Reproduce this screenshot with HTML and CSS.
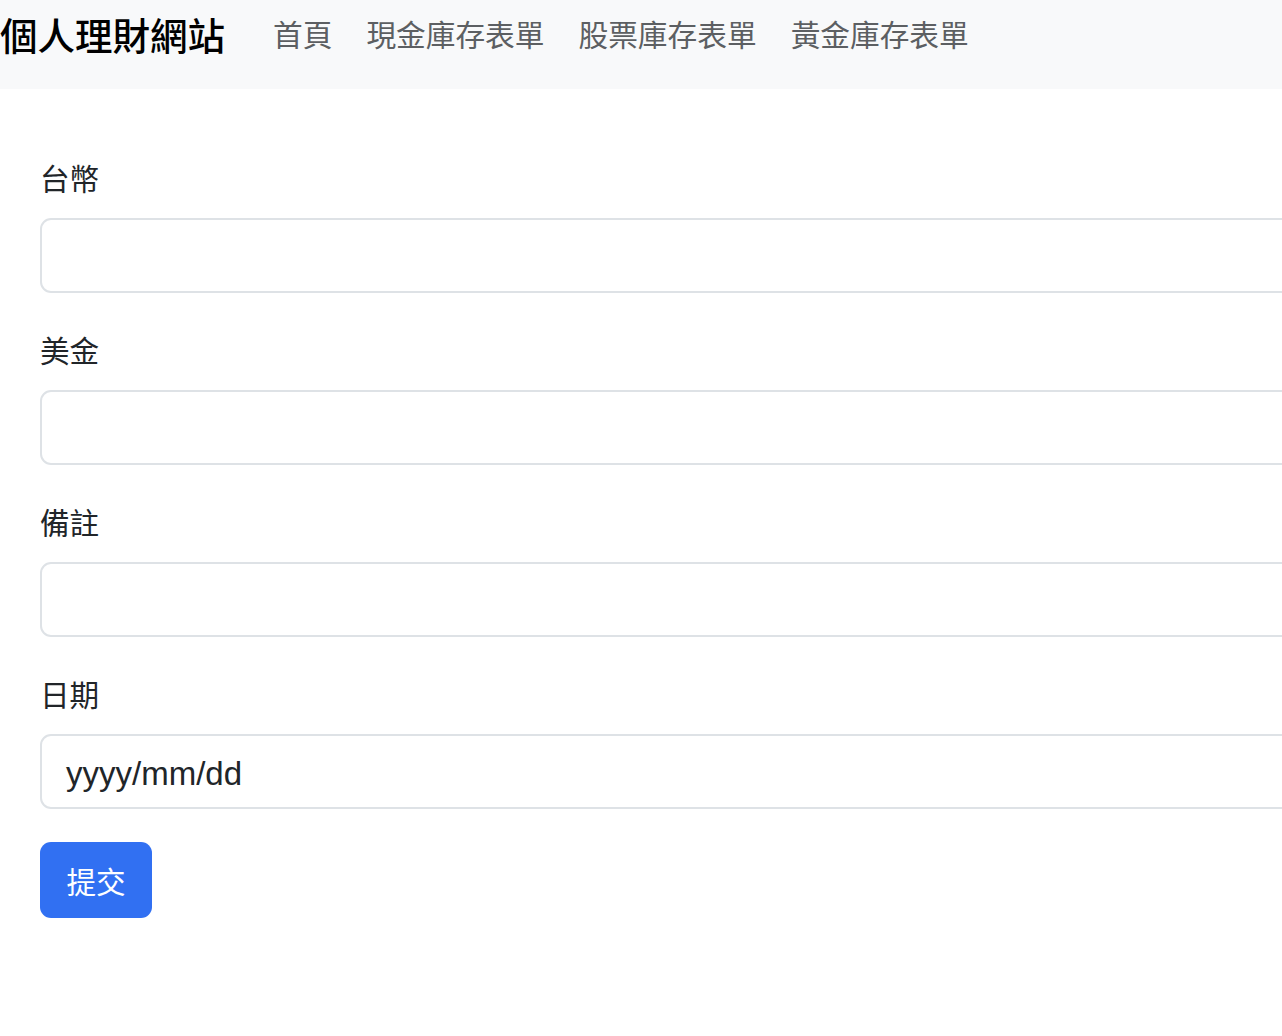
FILE: index.html
```html
<!DOCTYPE html>
<html lang="zh-Hant">
<head>
<meta charset="utf-8">
<title>個人理財網站</title>
<link rel="stylesheet" href="styles.css">
</head>
<body>
<nav class="navbar">
  <a class="brand" href="#">個人理財網站</a>
  <ul class="nav">
    <li><a class="nav-link" href="#">首頁</a></li>
    <li><a class="nav-link" href="#">現金庫存表單</a></li>
    <li><a class="nav-link" href="#">股票庫存表單</a></li>
    <li><a class="nav-link" href="#">黃金庫存表單</a></li>
  </ul>
</nav>
<main class="container">
  <form class="form">
    <div class="group">
      <label class="label" for="twd">台幣</label>
      <input class="control" id="twd" type="text">
    </div>
    <div class="group">
      <label class="label" for="usd">美金</label>
      <input class="control" id="usd" type="text">
    </div>
    <div class="group">
      <label class="label" for="note">備註</label>
      <input class="control" id="note" type="text">
    </div>
    <div class="group group-last">
      <label class="label" for="date">日期</label>
      <div class="control date-control" id="date">yyyy/mm/dd</div>
    </div>
    <button class="btn" type="button">提交</button>
  </form>
</main>
</body>
</html>
```
FILE: styles.css
```css
html, body {
  margin: 0;
  padding: 0;
  overflow-x: hidden;
  background: #fff;
}
body {
  font-family: "Noto Sans CJK TC", "Noto Sans", "Liberation Sans", sans-serif;
  color: #212529;
  font-size: 29.6px;
}
.navbar {
  display: flex;
  align-items: flex-start;
  height: 89px;
  background: #f8f9fa;
  box-sizing: border-box;
  padding-top: 6px;
}
.brand {
  font-size: 37.5px;
  font-weight: 500;
  color: #000;
  text-decoration: none;
  line-height: 56px;
  margin-right: 31px;
}
.nav {
  display: flex;
  list-style: none;
  margin: 0;
  padding: 0;
}
.nav-link {
  display: block;
  color: #5c5f62;
  text-decoration: none;
  font-size: 29.7px;
  line-height: 56px;
  padding: 0 17px;
}
.container {
  padding: 67px 0 0 40px;
}
.form {
  width: 1320px;
}
.group {
  margin-bottom: 35px;
}
.group-last {
  margin-bottom: 33px;
}
.label {
  display: block;
  line-height: 44px;
  margin-bottom: 18px;
}
.control {
  display: block;
  box-sizing: border-box;
  width: 100%;
  height: 75px;
  border: 2px solid #dee2e6;
  border-radius: 11px;
  background: #fff;
  font: inherit;
  color: #212529;
  padding: 0 24px;
  outline: none;
}
.date-control {
  display: flex;
  align-items: center;
  font-family: "Liberation Sans", "Noto Sans CJK TC", sans-serif;
  font-size: 33px;
  padding-top: 4px;
}
.btn {
  display: block;
  height: 76px;
  width: 112px;
  border: none;
  border-radius: 11px;
  background: #3170f2;
  color: #fff;
  font: inherit;
  padding: 0;
  cursor: pointer;
}
```
